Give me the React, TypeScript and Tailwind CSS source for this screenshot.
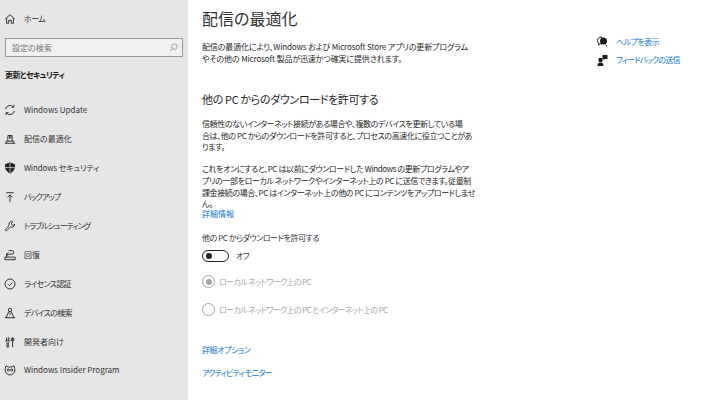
const font = { fontFamily: '"Noto Sans CJK JP", "Noto Sans", sans-serif' };

function Icon({ name }: { name: string }) {
  const paths: Record<string, React.ReactNode> = {
    home: <path d="M1.500 7 7 2l5.500 5M3 6v6h2.500V8.500h3V12H11V6" />,
    update: (
      <>
        <path d="M1.800 6A5.300 5.300 0 0 1 11 3.500M12.200 8A5.300 5.300 0 0 1 3 10.500" />
        <path d="M11.500 1v2.800H8.700M2.500 13v-2.800h2.800" />
      </>
    ),
    delivery: <path d="M1 12h12M2.500 12V9.500h9V12M4.500 9.500V3h5v6.500M6.500 3V6.500M8 3v3.500" />,
    shield: <path d="M7 1 12.500 3c0 5-1.500 8-5.500 10C3 11 1.500 8 1.500 3Z" fill="#1f1f1f" />,
    backup: <path d="M2.500 2h9M7 13V4.500M4 7.500l3-3 3 3" />,
    wrench: (
      <path d="M9 1.500a3.500 3.500 0 0 0-3 5L1.800 10.700a1 1 0 0 0 1.500 1.500L7.500 8a3.500 3.500 0 0 0 5-3L10.500 6.500 8.500 4.500 10 2Z" />
    ),
    recovery: <path d="M1 12.500h12V9.500H1ZM3 9.500V6M3 6h6.500a2 2 0 0 0 0-4H5.500M5 4 3 6l2 2" />,
    check: (
      <>
        <circle cx="7" cy="7" r="5.800" />
        <path d="m4.500 7.200 1.800 1.800 3.400-3.600" />
      </>
    ),
    find: (
      <>
        <circle cx="7" cy="3.500" r="2" />
        <path d="M1 12.500h12M2.500 12.500 5.500 5.500M11.500 12.500 8.500 5.500M7 6.500v3" />
      </>
    ),
    dev: <path d="M3 1.500v3.500M5.500 1.500v3.500M2.500 5h3.500v1.500l-1 1V13H3.500V7.500l-1-1ZM10 1.500v3M8.500 3h3v2.500h-3ZM10 5.500V13" />,
    insider: (
      <>
        <path d="M2.500 2 5 3.500h4L11.500 2l1 3v4.500L9 12.500H5L1.500 9.500V5Z" />
        <circle cx="5" cy="7" r="1.200" />
        <circle cx="9" cy="7" r="1.200" />
      </>
    ),
  };
  return (
    <svg width="12" height="12" viewBox="0 0 14 14" fill="none" stroke="#2b2b2b" strokeWidth="1.100" className="shrink-0">
      {paths[name]}
      {name === "shield" && <path d="M7 1v12M1.500 6.500h11" stroke="#e6e6e6" strokeWidth="0.800" />}
    </svg>
  );
}

const navItems = [
  { icon: "update", label: "Windows Update", track: "" },
  { icon: "delivery", label: "配信の最適化", track: "" },
  { icon: "shield", label: "Windows セキュリティ", track: "tracking-[-0.15px]" },
  { icon: "backup", label: "バックアップ", track: "tracking-[-1px]" },
  { icon: "wrench", label: "トラブルシューティング", track: "tracking-[-1px]" },
  { icon: "recovery", label: "回復", track: "" },
  { icon: "check", label: "ライセンス認証", track: "tracking-[-0.7px]" },
  { icon: "find", label: "デバイスの検索", track: "tracking-[-0.7px]" },
  { icon: "dev", label: "開発者向け", track: "" },
  { icon: "insider", label: "Windows Insider Program", track: "" },
];

function Radio({ checked, label }: { checked?: boolean; label: string }) {
  return (
    <div className="flex h-[14px] items-center gap-[4px]">
      <span className="flex h-[13px] w-[13px] items-center justify-center rounded-full border-[1.5px] border-[#a3a3a3]">
        {checked && <span className="h-[6px] w-[6px] rounded-full bg-[#a3a3a3]" />}
      </span>
      <span className="text-[8px] leading-[14px] tracking-[-0.65px] text-[#a6a6a6]">{label}</span>
    </div>
  );
}

export default function App() {
  return (
    <div style={font} className="flex h-[400px] w-[711px] overflow-hidden bg-white text-[#1f1f1f] [font-feature-settings:'palt']">
      {/* Sidebar */}
      <aside className="flex h-full w-[188px] shrink-0 flex-col bg-[#e6e6e6] pt-[12px]">
        <div className="flex h-[14px] items-center gap-[8px] pl-[4px] text-[8px] leading-[14px] tracking-[-0.5px] text-[#333]">
          <Icon name="home" />
          <span>ホーム</span>
        </div>
        <div className="mx-[5px] mt-[12px] flex h-[19px] items-center justify-between border-[1.5px] border-[#9a9a9a] bg-[#f0f0f0] pl-[6px] pr-[4px] text-[8px] text-[#7a7a7a]">
          <span>設定の検索</span>
          <svg width="9" height="9" viewBox="0 0 10 10" fill="none" stroke="#808080" strokeWidth="0.800">
            <circle cx="6" cy="4" r="3" />
            <path d="M3.800 6.200 1 9" />
          </svg>
        </div>
        <div className="mt-[11px] pl-[5px] text-[8px] font-bold leading-[14px] tracking-[-0.6px] text-[#1a1a1a]">更新とセキュリティ</div>
        <nav className="mt-[14px] flex flex-col">
          {navItems.map((item) => (
            <div key={item.label} className="flex h-[28.9px] items-center gap-[8px] pl-[4px] text-[8px] text-[#333]">
              <Icon name={item.icon} />
              <span className={item.track}>{item.label}</span>
            </div>
          ))}
        </nav>
      </aside>

      {/* Main */}
      <main className="w-[270px] shrink-0 whitespace-nowrap pl-[14px] pt-[6px] box-content">
        <h1 className="text-[16px] font-normal leading-[24px] text-[#333]">配信の最適化</h1>
        <p className="mt-[11px] text-[8px] leading-[12px] tracking-[-0.13px] text-[#262626]">
          配信の最適化により、Windows および Microsoft Store アプリの更新プログラム<br />やその他の Microsoft 製品が迅速かつ確実に提供されます。
        </p>
        <h2 className="mt-[26px] text-[11px] font-normal leading-[16px] tracking-[-0.35px] text-[#1f1f1f]">他の PC からのダウンロードを許可する</h2>
        <p className="mt-[11px] text-[8px] leading-[11.700px] tracking-[-0.4px] text-[#262626]">
          信頼性のないインターネット接続がある場合や、複数のデバイスを更新している場<br />合は、他の PC からのダウンロードを許可すると、プロセスの高速化に役立つことがあ<br />ります。
        </p>
        <p className="mt-[10px] text-[8px] leading-[11.700px] tracking-[-0.4px] text-[#262626]">
          これをオンにすると、PC は以前にダウンロードした Windows の更新プログラムやア<br />プリの一部をローカル ネットワークやインターネット上の PC に送信できます。従量制<br />課金接続の場合、PC はインターネット上の他の PC にコンテンツをアップロードしませ<br />ん。
        </p>
        <div className="-mt-[2px] text-[8px] leading-[12px] text-[#0f78d4]">詳細情報</div>
        <div className="mt-[12px] text-[8px] leading-[12px] tracking-[-0.45px] text-[#333]">他の PC からダウンロードを許可する</div>
        <div className="mt-[6px] flex items-center gap-[7px]">
          <span className="flex h-[12px] w-[27px] items-center rounded-full border-[1.5px] border-[#222] pl-[3px]">
            <span className="h-[6px] w-[6px] rounded-full bg-[#222]" />
          </span>
          <span className="text-[8px] leading-[12px] tracking-[-0.4px] text-[#333]">オフ</span>
        </div>
        <div className="mt-[13px] flex flex-col gap-[14px]">
          <Radio checked label="ローカル ネットワーク上の PC" />
          <Radio label="ローカル ネットワーク上の PC とインターネット上の PC" />
        </div>
        <div className="mt-[26px] text-[8px] leading-[14px] tracking-[-0.4px] text-[#0f78d4]">詳細オプション</div>
        <div className="mt-[9px] text-[8px] leading-[14px] tracking-[-0.8px] text-[#0f78d4]">アクティビティ モニター</div>
      </main>

      {/* Help links */}
      <div className="ml-[125px] flex flex-col gap-[5px] pt-[35px] text-[8px] leading-[13px] text-[#0f78d4]">
        <div className="flex items-center gap-[8px]">
          <svg width="11" height="11" viewBox="0 0 11 11" className="shrink-0">
            <path d="M4.500 1C2 1 .5 2.500.5 4.500c0 1.200.5 2 1.200 2.700L1.300 9l2-1.200c.5.100.8.200 1.200.200Z" fill="none" stroke="#1a1a1a" />
            <circle cx="6.500" cy="5" r="3.500" fill="#1a1a1a" />
            <path d="M8.500 8.500 10 10" stroke="#1a1a1a" />
          </svg>
          <span className="tracking-[-0.5px]">ヘルプを表示</span>
        </div>
        <div className="flex items-center gap-[8px]">
          <svg width="11" height="12" viewBox="0 0 11 12" fill="#1a1a1a" className="shrink-0">
            <circle cx="3.500" cy="6" r="2.200" />
            <path d="M.5 12c0-2.500 1-3.500 3-3.500s3 1 3 3.500Z" />
            <path d="M5.500 1h5v4H8L6.500 6.300V5h-1Z" />
          </svg>
          <span className="tracking-[-0.8px]">フィードバックの送信</span>
        </div>
      </div>
    </div>
  );
}
